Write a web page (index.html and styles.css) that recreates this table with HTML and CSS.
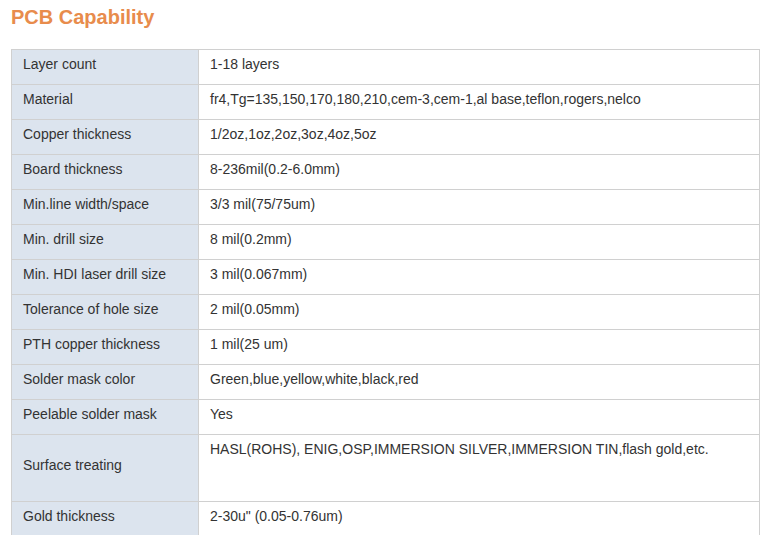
FILE: index.html
```html
<!DOCTYPE html>
<html>
<head>
<meta charset="utf-8">
<link rel="stylesheet" href="styles.css">
</head>
<body>
<div class="page">
  <h2 class="title">PCB Capability</h2>
  <table class="cap">
    <tr><td class="k">Layer count</td><td class="v">1-18 layers</td></tr>
    <tr><td class="k">Material</td><td class="v">fr4,Tg=135,150,170,180,210,cem-3,cem-1,al base,teflon,rogers,nelco</td></tr>
    <tr><td class="k">Copper thickness</td><td class="v">1/2oz,1oz,2oz,3oz,4oz,5oz</td></tr>
    <tr><td class="k">Board thickness</td><td class="v">8-236mil(0.2-6.0mm)</td></tr>
    <tr><td class="k">Min.line width/space</td><td class="v">3/3 mil(75/75um)</td></tr>
    <tr><td class="k">Min. drill size</td><td class="v">8 mil(0.2mm)</td></tr>
    <tr><td class="k">Min. HDI laser drill size</td><td class="v">3 mil(0.067mm)</td></tr>
    <tr><td class="k">Tolerance of hole size</td><td class="v">2 mil(0.05mm)</td></tr>
    <tr><td class="k">PTH copper thickness</td><td class="v">1 mil(25 um)</td></tr>
    <tr><td class="k">Solder mask color</td><td class="v">Green,blue,yellow,white,black,red</td></tr>
    <tr><td class="k">Peelable solder mask</td><td class="v">Yes</td></tr>
    <tr class="tall"><td class="k">Surface treating</td><td class="v top">HASL(ROHS), ENIG,OSP,IMMERSION SILVER,IMMERSION TIN,flash gold,etc.</td></tr>
    <tr><td class="k">Gold thickness</td><td class="v">2-30u" (0.05-0.76um)</td></tr>
  </table>
</div>
</body>
</html>
```
FILE: styles.css
```css
html, body {
  margin: 0;
  padding: 0;
  background: #fff;
}
.page {
  padding: 5px 0 0 11px;
  font-family: "Liberation Sans", Arial, sans-serif;
}
.title {
  margin: 0;
  font-size: 20px;
  line-height: 24px;
  font-weight: bold;
  color: #e88c4c;
}
.cap {
  margin-top: 20px;
  width: 749px;
  border-collapse: collapse;
  font-size: 14px;
  color: #333;
}
.cap td {
  border: 1px solid #d0d0d0;
  height: 35px;
  padding: 0 11px 7px;
  box-sizing: border-box;
  vertical-align: middle;
  line-height: 16px;
}
.cap td.k {
  width: 187px;
  background: #dce4ee;
}
.cap tr.tall td {
  height: 67px;
}
.cap td.v.top {
  vertical-align: top;
  padding-top: 6px;
  padding-bottom: 0;
}
```
